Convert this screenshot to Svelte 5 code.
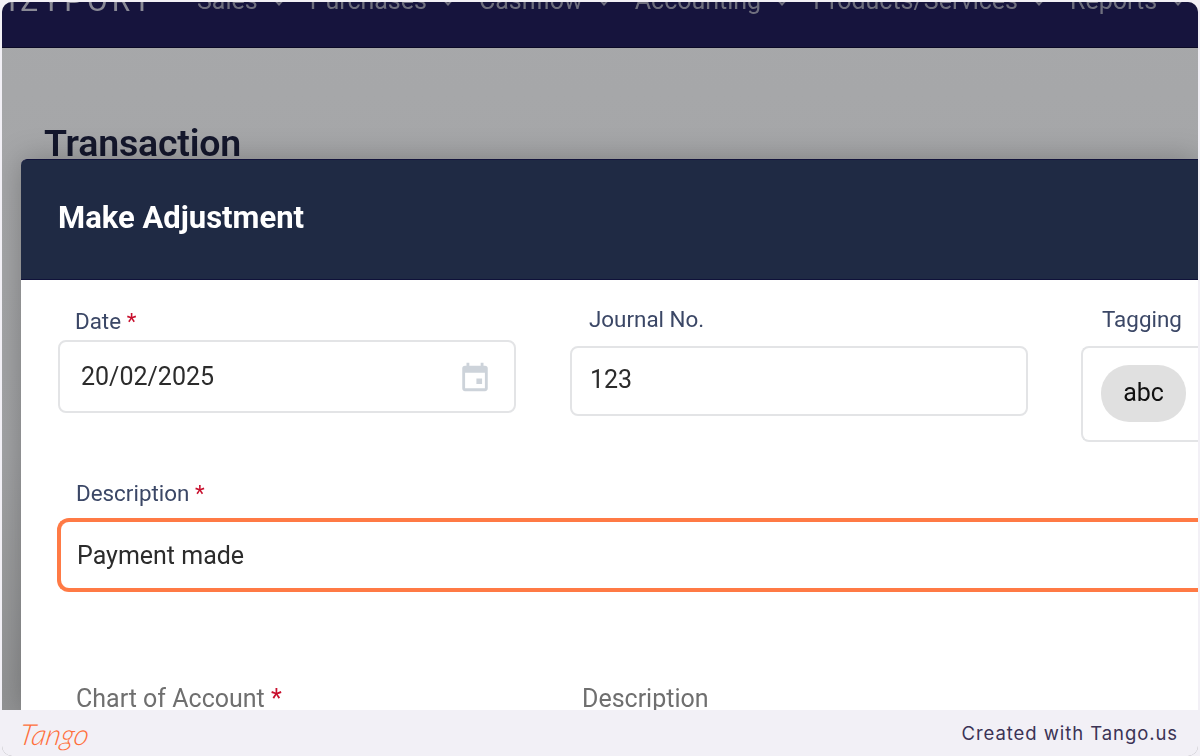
<script>
    const navItems = ['Sales', 'Purchases', 'Cashflow', 'Accounting', 'Products/Services', 'Reports'];
</script>

<div class="shot">
    <div class="frame">
        <header class="nav">
            <span class="brand">IZYPORT</span>
            {#each navItems as item}
                <span class="nav-item">{item}<i class="caret"></i></span>
            {/each}
        </header>

        <main class="page">
            <h1>Transaction</h1>
        </main>

        <section class="modal">
            <div class="modal-head">Make Adjustment</div>
            <div class="modal-body">
                <div class="row">
                    <div class="field date">
                        <div class="label">Date <span class="req">*</span></div>
                        <div class="input">
                            <span>20/02/2025</span>
                            <svg class="cal" viewBox="0 0 24 24" width="34" height="34">
                                <path fill="#cdd3da" d="M19 4h-1V2h-2v2H8V2H6v2H5a2 2 0 0 0-2 2v14a2 2 0 0 0 2 2h14a2 2 0 0 0 2-2V6a2 2 0 0 0-2-2zm0 16H5V9h14v11zm-6-7h4v4h-4z"/>
                            </svg>
                        </div>
                    </div>
                    <div class="field journal">
                        <div class="label">Journal No.</div>
                        <div class="input">123</div>
                    </div>
                    <div class="field tagging">
                        <div class="label">Tagging</div>
                        <div class="input tags"><span class="chip">abc</span></div>
                    </div>
                </div>

                <div class="field desc">
                    <div class="label">Description <span class="req">*</span></div>
                    <div class="input focus">Payment made</div>
                </div>

                <div class="row lower">
                    <div class="label muted account">Chart of Account <span class="req">*</span></div>
                    <div class="label muted">Description</div>
                </div>
            </div>
        </section>

        <footer class="tango">
            <span class="logo">Tango</span>
            <span class="credit">Created with Tango.us</span>
        </footer>
    </div>
</div>

<style>
:global(body) {
    background: #f2f0f6;
}

.shot {
    height: 756px;
    padding: 2px 2px 0;
    box-sizing: border-box;
    overflow: hidden;
    font-family: Roboto, "Liberation Sans", sans-serif;
}

.frame {
    position: relative;
    height: 100%;
    display: flex;
    flex-direction: column;
    overflow: hidden;
    border-radius: 10px;
    background: linear-gradient(#a7a8aa, #a2a3a5 60%, #8f9091);
}

.nav {
    flex: none;
    height: 46px;
    box-sizing: border-box;
    display: flex;
    align-items: flex-end;
    gap: 26px;
    padding: 0 0 33px 6px;
    overflow: hidden;
    background: #16143d;
    border-bottom: 1px solid #0b0a26;
    color: #6f6f7e;
    font-size: 25px;
    line-height: 26px;
    white-space: nowrap;
    filter: blur(.4px);
}

.brand {
    font-size: 30px;
    letter-spacing: 4px;
    color: #8a8a96;
    margin-right: 16px;
}

.caret {
    display: inline-block;
    width: 6px;
    height: 6px;
    margin: 0 1px 5px 17px;
    border-right: 2px solid #6f6f7e;
    border-bottom: 2px solid #6f6f7e;
    transform: rotate(45deg);
}

.page {
    flex: 1;
    padding: 74px 0 0 42px;
}

h1 {
    margin: 0;
    font-size: 37.5px;
    line-height: 42px;
    font-weight: 600;
    letter-spacing: -.2px;
    color: #14172c;
    filter: blur(.4px);
}

.modal {
    position: absolute;
    left: 19px;
    top: 157px;
    right: 0;
    bottom: 46px;
    border-radius: 6px 0 0 0;
    background: #fff;
    box-shadow: 0 0 30px rgba(0, 0, 0, .25);
    filter: blur(.4px);
}

.modal-head {
    height: 121px;
    box-sizing: border-box;
    padding: 38px 0 0 37px;
    border-radius: 6px 0 0 0;
    border-top: 1px solid #10123a;
    border-bottom: 1px solid #10123a;
    background: #1f2a44;
    color: #fff;
    font-size: 31px;
    line-height: 40px;
    font-weight: 700;
}

.modal-body {
    padding-top: 28px;
    padding-left: 37px;
}

.row {
    display: flex;
    align-items: flex-start;
    height: 172px;
}

.field {
    flex: none;
}

.label {
    font-size: 22.4px;
    line-height: 26px;
    color: #3b4766;
}

.req {
    color: #c8102e;
}

.input {
    box-sizing: border-box;
    display: flex;
    align-items: center;
    border: 2px solid #e3e4e6;
    border-radius: 8px;
    font-size: 25px;
    color: #2c2c2c;
    background: #fff;
}

.date {
    width: 458px;
}

.date .label {
    padding-left: 17px;
}

.date .input {
    height: 73px;
    margin-top: 6px;
    justify-content: space-between;
    padding: 0 22px 0 21px;
}

.journal {
    width: 458px;
    margin-left: 54px;
    margin-top: -2px;
}

.journal .label {
    padding-left: 19px;
}

.journal .input {
    height: 70px;
    margin-top: 14px;
    padding: 0 0 4px 18px;
}

.tagging {
    margin-left: 53px;
    margin-top: -2px;
    width: 200px;
}

.tagging .label {
    padding-left: 21px;
}

.tags {
    height: 96px;
    margin-top: 14px;
    padding: 0 0 2px 18px;
    border-right: 0;
    border-radius: 8px 0 0 8px;
}

.chip {
    width: 85px;
    height: 57px;
    display: flex;
    align-items: center;
    justify-content: center;
    padding-bottom: 2px;
    box-sizing: border-box;
    border-radius: 28px;
    background: #e0e0e0;
    color: #111;
    font-size: 25px;
}

.desc .label {
    padding-left: 18px;
}

.desc .input.focus {
    height: 74px;
    margin-top: 12px;
    margin-left: -1px;
    padding-left: 16px;
    border: 4px solid #ff7a45;
    border-right: 0;
    border-radius: 12px 0 0 12px;
}

.lower {
    height: auto;
    margin-top: 94px;
    padding-left: 18px;
}

.muted {
    font-size: 25px;
    color: #6f6f6f;
}

.account {
    width: 506px;
}

.tango {
    position: absolute;
    left: 0;
    right: 0;
    bottom: 0;
    height: 46px;
    box-sizing: border-box;
    display: flex;
    align-items: center;
    justify-content: space-between;
    padding: 0 20px 0 18px;
    background: #f2f0f6;
}

.logo {
    font-family: Lato, sans-serif;
    font-style: italic;
    font-weight: 300;
    font-size: 29px;
    color: #ff6f3c;
    transform: skewX(-10deg);
}

.credit {
    font-family: Inter, sans-serif;
    font-size: 18.5px;
    letter-spacing: .93px;
    color: #3b3355;
}
</style>
